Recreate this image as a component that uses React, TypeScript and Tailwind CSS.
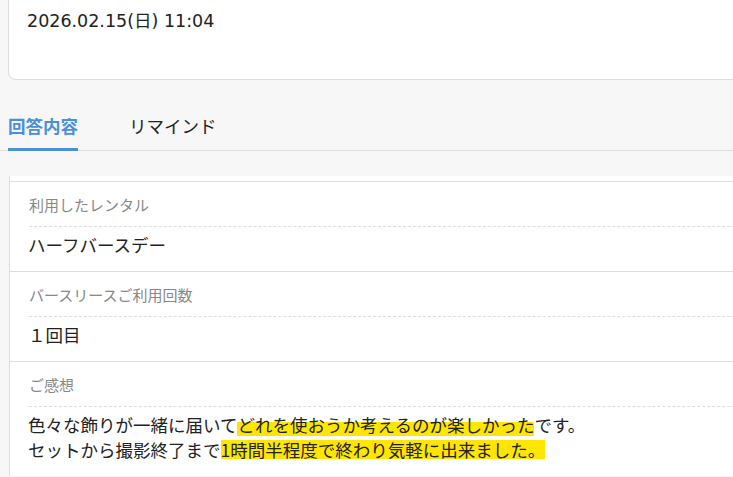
const font = { fontFamily: '"Noto Sans CJK JP", "Noto Sans", sans-serif' };

type Item = { label: string; value: React.ReactNode };

const items: Item[] = [
  { label: "利用したレンタル", value: "ハーフバースデー" },
  { label: "バースリースご利用回数", value: "１回目" },
  {
    label: "ご感想",
    value: (
      <>
        色々な飾りが一緒に届いて
        <span className="bg-[linear-gradient(transparent_42%,#ffe600_42%,#ffe600_96%,transparent_96%)]">
          どれを使おうか考えるのが楽しかった
        </span>
        です。
        <br />
        セットから撮影終了まで
        <span className="bg-[linear-gradient(transparent_14%,#ffe600_14%,#ffe600_90%,transparent_90%)]">
          1時間半程度で終わり気軽に出来ました。
        </span>
      </>
    ),
  },
];

export default function App() {
  return (
    <div className="w-[733px] h-[477px] overflow-hidden bg-[#f7f7f7]" style={font}>
      <div className="w-[780px]">
        {/* Date card */}
        <div className="ml-2 h-[80px] bg-white border-x border-b border-[#dddddd] rounded-b-lg pl-[18px] pt-[9px]">
          <p className="font-['DejaVu_Sans','Noto_Sans_CJK_JP',sans-serif] text-[17.5px] leading-[24px] text-[#222]">
            2026.02.15(日) 11:04
          </p>
        </div>

        {/* Tabs */}
        <div className="flex gap-[51px] pl-2 border-b border-[#dddddd]">
          <button className="-mb-px pt-[34px] pb-[10px] border-b-[3px] border-[#4a90d9] text-[17.5px] leading-[24px] font-bold text-[#4a90d9]">
            回答内容
          </button>
          <button className="-mb-px pt-[34px] pb-[10px] border-b-[3px] border-transparent text-[17.5px] leading-[24px] text-[#222]">
            リマインド
          </button>
        </div>

        {/* Answers */}
        <div className="mt-[25px] ml-[9px] bg-white border-l border-[#dddddd] pt-[5px]">
          {items.map((it) => (
            <div key={it.label} className="border-t border-[#dddddd]">
              <div className="ml-[19px] pt-[12px] pb-[10px] border-b border-dashed border-[#dddddd] text-[15px] leading-[22px] text-[#888]">
                {it.label}
              </div>
              <div className="pl-[18px] pt-[5px] pb-[14px] text-[17.5px] leading-[25px] text-[#222]">
                {it.value}
              </div>
            </div>
          ))}
        </div>
      </div>
    </div>
  );
}
